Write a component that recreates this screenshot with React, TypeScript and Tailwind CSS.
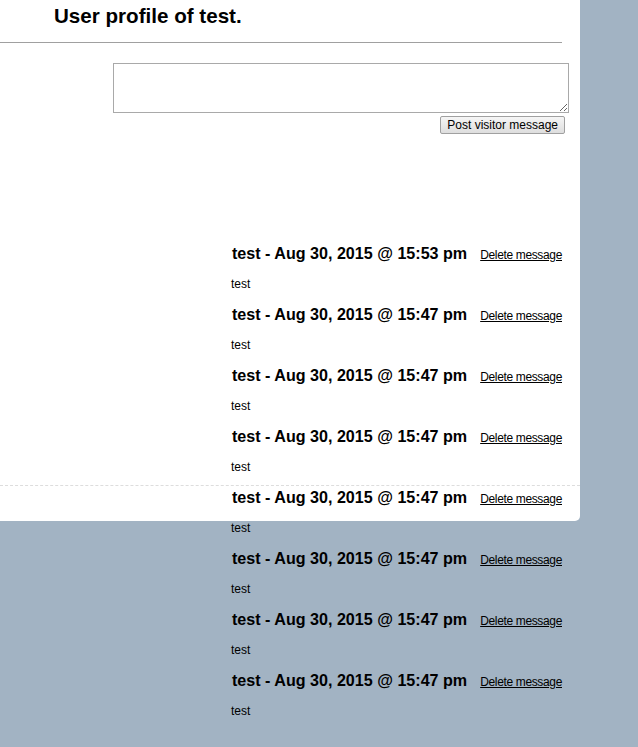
const messages = [
  '15:53',
  '15:47',
  '15:47',
  '15:47',
  '15:47',
  '15:47',
  '15:47',
  '15:47',
];

export default function App() {
  return (
    <div className="min-h-[747px] w-full bg-[#a2b3c3] font-['Liberation_Sans',Arial,sans-serif] text-black">
      <div className="relative w-[580px] h-[521px] bg-white rounded-br-[5px]">
        <h1 className="pt-[4px] pl-[54px] text-[20.6px] leading-[24px] font-bold">User profile of test.</h1>
        <div className="mt-[14px] w-[562px] border-t border-[#a0a0a0]" />

        <div className="mt-[20px] pl-[113px]">
          <textarea className="block w-[456px] h-[50px] border border-[#a9a9a9] bg-white resize" />
          <div className="w-[452px] flex justify-end mt-[3px]">
            <button className="h-[18px] px-[6px] text-[12px] leading-[14px] border border-[#a0a0a0] rounded-[2px] bg-gradient-to-b from-[#f6f6f6] to-[#dedede] text-black">
              Post visitor message
            </button>
          </div>
        </div>

        <div className="mt-[109px] pl-[231px]">
          {messages.map((time, i) => (
            <div key={i} className="mb-[12px]">
              <div className="flex items-baseline gap-[13px]">
                <span className="pl-[1px] text-[16.1px] leading-[20px] font-bold">test - Aug 30, 2015 @ {time} pm</span>
                <a href="#" className="text-[12px] leading-[16px] tracking-[-0.35px] underline text-black">Delete message</a>
              </div>
              <p className="mt-[13px] text-[12px] leading-[16px]">test</p>
            </div>
          ))}
        </div>

        <div className="absolute left-0 top-[485px] w-[580px] border-t border-dashed border-[#dddddd]" />
      </div>
    </div>
  );
}
